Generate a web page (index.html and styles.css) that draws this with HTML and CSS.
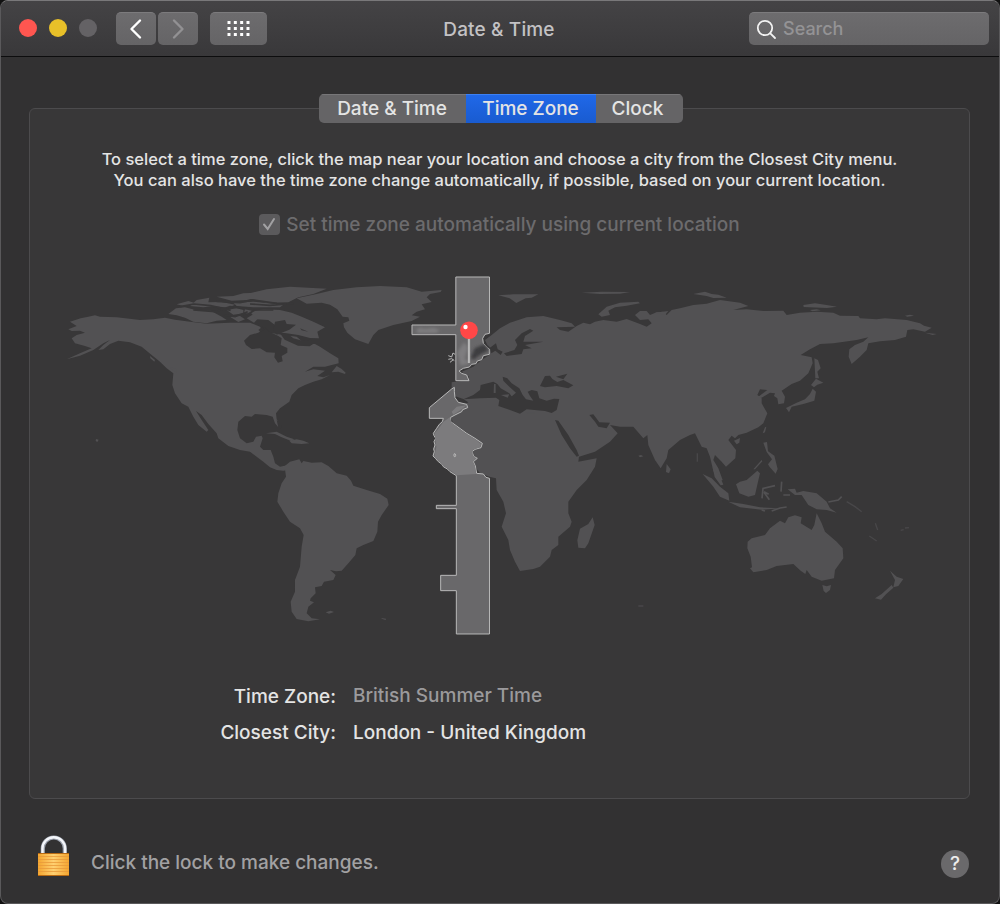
FILE: index.html
```html
<!DOCTYPE html>
<html lang="en">
<head>
<meta charset="utf-8">
<title>Date &amp; Time</title>
<link rel="stylesheet" href="styles.css">
</head>
<body>
<div class="window">
  <header class="titlebar">
    <div class="lights"><i class="light close"></i><i class="light minimise"></i><i class="light zoom"></i></div>
    <div class="nav">
      <button class="tool back" aria-label="Back"><svg width="40" height="33" viewBox="0 0 40 33"><path d="M24 8.500L15.500 17l8.500 8.500"/></svg></button>
      <button class="tool forward" aria-label="Forward"><svg width="40" height="33" viewBox="0 0 40 33"><path d="M16 8.500l8.500 8.500L16 25.500"/></svg></button>
    </div>
    <button class="tool all" aria-label="Show all"><svg width="57" height="33" viewBox="0 0 57 33"><path d="M17.500 10.500h22.500M17.500 16.500h22.500M17.500 22.500h22.500"/></svg></button>
    <h1 class="title"><span class="t-title">Date &amp; Time</span></h1>
    <div class="search"><svg width="22" height="22" viewBox="0 0 22 22"><circle cx="9" cy="9" r="7.200"/><path d="M14.300 14.300l4.700 4.700"/></svg><span class="t-search">Search</span></div>
  </header>
  <main class="content">
    <section class="panel">
      <nav class="tabs">
        <span class="tab tab-date"><span>Date &amp; Time</span></span>
        <span class="tab tab-zone active"><span>Time Zone</span></span>
        <span class="tab tab-clock"><span>Clock</span></span>
      </nav>
      <p class="help"><span class="line1">To select a time zone, click the map near your location and choose a city from the Closest City menu.</span><span class="line2">You can also have the time zone change automatically, if possible, based on your current location.</span></p>
      <div class="auto"><span class="check"><svg width="20" height="20" viewBox="0 0 20 20"><path d="M5 10.500l3.700 4.500L15 5"/></svg></span><span class="t-auto">Set time zone automatically using current location</span></div>
      <svg class="map" width="900" height="380" viewBox="50 265 900 380">
        <defs>
          <linearGradient id="stem" x2="1" y2="0"><stop stop-color="#999"/><stop offset=".5" stop-color="#ccc"/><stop offset="1" stop-color="#888"/></linearGradient>
          <filter id="soft"><feGaussianBlur stdDeviation="4"/></filter>
        </defs>
        <g class="land">
          <!-- North America, Arctic islands and Greenland -->
          <g transform="translate(50 270) scale(.33333)">
            <path d="M60 155L92 145 115 140 135 136 150 140 200 142 270 150 310 148 345 143 375 149 420 155 470 161 540 158 600 158 630 170 640 185 700 195 740 200 765 222 795 222 810 230 840 250 865 265 866 280 848 284 825 290 790 290 765 305 790 298 825 302 802 318 820 322 840 315 815 328 790 335 765 345 745 355 725 375 718 395 690 415 678 430 680 448 690 465 685 472 675 460 668 440 650 435 615 432 605 440 585 438 565 455 562 480 570 505 590 520 610 515 618 500 635 497 638 505 630 530 640 540 662 540 670 560 675 580 690 590 715 585 715 600 700 602 680 600 660 592 640 575 620 560 600 545 570 540 535 528 505 505 500 490 475 462 455 435 438 423 455 450 475 480 470 485 445 465 430 440 415 410 395 400 375 370 367 345 370 310 350 295 330 275 305 255 275 230 240 217 205 212 180 222 160 238 145 240 160 225 180 210 160 220 130 240 90 257 50 268 90 250 125 235 105 228 75 220 65 205 80 195 105 188 90 182 65 183 55 178 80 168z"/>
            <path d="M355 132L378 115 405 112 445 122 482 122 515 140 530 150 500 152 470 160 430 155 405 143 380 136zM380 103L415 93 432 98 420 105 400 108zM420 108L440 90 478 83 475 97 515 96 555 104 535 113 490 108 460 112zM500 80L550 78 580 70 625 68 625 82 590 90 545 92zM530 120L560 115 580 120 580 130 550 134zM585 118L605 122 598 132 582 128zM540 140L570 138 585 148 565 156zM590 145L615 130 625 145 612 158zM565 78L650 58 720 50 830 56 790 72 745 82 715 97 650 98 610 88zM550 98L610 95 700 104 690 112 610 112 560 108z"/>
            <path d="M600 125L640 118 690 120 725 128 755 140 790 155 825 172 802 185 807 205 780 204 745 195 710 190 680 187 675 165 655 150 620 148z"/>
            <path d="M740 85L800 72 850 60 920 52 990 48 1070 52 1115 65 1175 60 1172 66 1140 72 1130 82 1145 96 1115 103 1125 118 1100 125 1085 136 1110 140 1085 153 1030 165 985 180 970 195 955 222 915 208 892 188 882 172 880 160 898 152 895 142 878 140 862 118 840 104 815 98 770 101z"/>
            <path d="M845 307L860 288 875 297 887 308 885 312 865 305zM648 490L680 485 710 500 733 508 722 512 695 502 675 492zM718 512L740 508 760 512 778 520 755 522 725 520zM138 507l8 2-4 7-5-3zM300 258l15 12-2 5-12-10zM360 292l18 5 2 10-12-6z"/>
            <g class="water"><path d="M582 212L600 195 625 188 645 172 655 184 685 198 695 205 692 225 712 234 712 248 695 258 698 274 684 278 673 262 675 248 650 247 630 235 605 237 588 225zM675 155l30-5 5 12 28 2-20 15-38 15-10-15z"/><path d="M690 190l25 3 15 12 30 8 22-4 12 10-15 10-35-2-40-18zM680 450l14 15-1 10-8-2zM625 180l12-10 6 8-10 8zM750 175l25 10-20-4z"/><path class="channels" d="M390 110l42-8 50 5 60 14M430 120l65 5 45-15 50 5M500 94l70 4 40-8 70 10M520 135l35 5 38-15M580 140l35-20 55 0M600 102l60 4 70-6"/></g>
          </g>
          <!-- South America -->
          <g transform="translate(240 430) scale(.33333)">
            <path d="M120 118L130 112 150 95 178 88 185 100 190 93 215 98 245 97 265 108 290 130 320 137 333 152 340 167 380 180 420 192 442 206 446 225 425 255 414 275 412 305 400 333 370 345 350 355 346 375 325 400 305 422 288 424 270 420 287 435 280 450 252 455 245 468 225 472 227 490 212 505 210 512 222 517 205 530 200 550 215 565 240 568 205 574 170 567 155 545 152 515 165 485 165 450 180 410 185 350 191 315 180 295 150 275 130 245 112 215 115 190 125 160 138 140 135 118zM257 547l15-5 10 4-15 5zM423 564l15 2-1 4-10-3z"/>
          </g>
          <!-- Europe, Asia and Africa -->
          <g transform="translate(480 280) scale(.33333)">
            <path d="M-85 307L-35 300-33 290-55 275-20 260 5 240 28 225 32 205 22 195 15 180 35 165 60 145 90 128 140 112 190 108 240 120 275 130 285 140 230 142 240 150 265 155 290 138 310 128 330 133 345 125 370 120 410 125 440 117 480 132 500 140 515 130 505 118 480 120 465 105 480 93 500 93 510 105 530 97 550 95 560 105 575 90 600 85 640 75 680 71 720 60 780 68 805 78 760 90 800 88 850 93 910 92 920 105 960 98 1010 95 1060 98 1080 107 1135 108 1140 115 1190 118 1215 115 1280 120 1320 130 1332 137 1355 143 1335 155 1300 148 1282 150 1278 170 1245 180 1200 184 1165 190 1160 210 1140 230 1115 252 1106 230 1108 208 1125 195 1150 185 1165 172 1130 180 1060 190 1020 192 990 208 962 225 995 232 998 250 985 280 960 302 935 312 905 332 915 350 912 370 895 373 892 355 882 348 885 340 870 338 845 353 835 350 862 330 840 328 832 345 845 355 845 370 862 400 850 430 835 442 800 458 775 465 765 475 755 467 745 480 768 510 766 535 738 560 725 545 705 525 700 540 715 565 728 600 720 603 700 573 690 530 680 505 665 500 645 460 630 465 600 480 565 510 560 535 542 565 525 540 505 495 502 465 490 475 460 440 420 440 390 435 413 460 390 485 345 515 297 530 295 545 350 535 345 560 320 600 290 630 265 665 265 700 275 725 270 740 235 770 235 795 215 810 210 830 180 860 160 867 120 873 105 845 90 810 85 780 65 740 78 700 70 665 50 630 48 595 28 590 0 580-60 500-90 400-35 367-50 357-85 345z"/>
            <path d="M55 46l45-3 75 0-20 10-18 2-28 14-20-14zM305 38l60-3 85 1-30 5-60 1zM355 103L380 80 420 68 475 65 480 70 440 77 405 82 385 92 390 105 365 110zM525 98l40-5-10 12zM640 42l35-7 20 7 20 2 25 9-40 1-20-6zM970 75l35-5 30 4 36 6-30 4-70-3zM990 90l20-2 12 3-25 3zM1275 107l15-3 12 3-20 3zM1335 158l35 4-12 3zM560 552l12 16-5 12-9-4zM338 712l6 23-19 55-10 15-20-2-3-22 8-35 25-14zM475 527l8-2 7 4-10 3z"/>
            <path d="M993 315L1008 296 1030 308 1012 314 1002 322zM998 326L1008 335 1003 362 970 372 935 380 927 397 918 384 950 368 975 358 990 342zM1003 235L1014 240 1022 265 1012 275 1017 295 1006 295zM848 460L855 442 859 440 855 457zM762 482l18-8-2 14-8 5zM850 488l11-2 3 28 19 13 10 40-6 14-18-20-5-8 12-15-16-22zM845 540l-25 28 5 0 22-24z"/>
            <g class="water">
              <path d="M-50 358L-20 345 0 330 2 315 40 305 52 312 62 325 88 340 96 350 90 353 100 345 108 338 88 320 70 302 68 290 82 295 95 310 118 325 128 345 138 358 160 362 150 348 143 335 155 330 172 334 178 355 200 362 222 356 238 357 230 390 215 399 195 393 140 388 120 401 90 390 55 378 58 360 48 353 0 355zM180 318L195 288 210 287 217 297 232 306 250 300 280 316 265 325 230 318 195 322zM228 290l34-9-12 17zM105 180L125 160 150 147 160 152 135 168 130 185 190 185 135 195 155 205 130 208 125 222 80 228 72 220 103 210 112 195zM30 203l18-13 5 18 15 7-6 10-16-13-12 8z"/>
              <path d="M225 420L235 422 265 465 290 510 297 527 290 530 270 505 245 465zM328 405L340 403 358 427 390 428 380 445 355 440 345 425z"/>
            </g>
            <path d="M42 312h5v27h-6zM63 345l25-2-5 10zM140 398h25v3h-22z"/>
          </g>
          <!-- Indonesia, Australia and New Zealand -->
          <g transform="translate(680 430) scale(.33333)">
            <path d="M68 132L95 145 120 170 145 190 148 212 120 200 100 170zM145 215L190 222 240 232 300 235 245 239 180 232zM168 163L180 155 200 150 232 122 240 130 234 155 225 195 205 200 178 190zM98 112l20 22 12 30-8 2-18-25zM323 178L345 176 350 188 370 183 410 190 440 215 450 235 470 248 440 240 410 238 385 225 365 195 345 195zM203 335L215 325 255 315 270 295 300 272 315 280 325 262 345 256 365 262 362 280 395 300 403 285 410 250 425 280 435 305 470 335 488 355 490 385 465 420 462 445 425 452 395 440 380 420 376 432 362 422 340 402 290 408 260 420 220 427 210 415 216 412 212 380 202 355zM427 465l13 4 13-4-3 15-12 9-7-6zM630 422L650 440 670 447 655 468 640 472 645 450zM635 465l5 8-22 20-15 16-18-4 20-13z"/>
            <path class="islands" d="M246 205l3-30 36-8M252 185l14 8M252 187l16 22M305 155l-2 30M310 195l20 0M245 240l10 3M275 243l25-9 20-3M445 216l30-6 10-10"/>
            <path class="islets" d="M500 215l25 15 20 15M568 318l22 15M662 301l9-2M675 294l12-1M586 280l7 20M52 70l0 25M-125 528l15 0"/>
          </g>
        </g>
        <!-- Selected zone -->
        <g transform="translate(400 265) scale(.33333)">
          <g class="zone">
            <path d="M167.500 36H268.500V205L255 208 248 220 250 235 262 248 268 252V268L250 272 245 284 232 288 228 296 215 298 208 306 190 310 177 318 185 325 200 330 207 347H167.500V209H36V180H167.500z"/>
            <path d="M163 367L155 372 88 428V460H130L127 470 118 478 110 490 100 505 102 512 107 520 102 530 105 540 101 552 103 560 99 573 107 581 115 590 126 598 130 605 142 612 150 620 169 632V721H109V731H169V931H122V977H169V1107H268.500V640L258 637 250 627 230 625 226 603 220 590 232 580 221 574 216 560 225 553 243 548 247 535 225 520 200 505 152 470 152 457 165 450 185 440 188 434 203 428 200 418 175 412 165 398 163 380z"/>
          </g>
          <path class="zone-land" d="M130 470L150 457 155 473 200 508 225 522 243 537 240 547 218 555 218 570 228 580 219 590 225 603 228 627 170 631 150 615 130 602 103 575 109 545 106 525 104 505 120 485zM155 440l15-15 30-4-15 12-25 16z"/>
          <path class="zone-glow" d="M48 195l12-7 15 4 25-4 20 8-12 8-55 0zM172 262l20-30 12 15-10 35 18 12-30 8z"/>
          <path class="shadow" d="M212 278l12-28 28-12 15 18-24 12-22 16z"/>
          <path class="outline" d="M145 272l10 4 4-12 6 4M145 283l10-2 8 6M150 292l10-8M163 566q4 0 4 5t-4 4q-3-5 0-9z"/>
        </g>
        <rect x="467.700" y="337" width="2.600" height="26" fill="url(#stem)"/>
        <circle cx="469" cy="330.300" r="8.800" fill="#ff4747"/>
        <circle cx="465.500" cy="327" r="2.200" fill="#fff"/>
      </svg>
      <dl class="info">
        <dt><span class="t-zone">Time Zone:</span></dt><dd class="muted"><span class="t-bst">British Summer Time</span></dd>
        <dt><span class="t-city">Closest City:</span></dt><dd><span class="t-london">London - United Kingdom</span></dd>
      </dl>
    </section>
    <footer class="footer">
      <svg class="lock" width="34" height="42" viewBox="0 0 34 42">
        <defs><linearGradient id="brass" x2="1" y2="0"><stop stop-color="#f4a52f"/><stop offset=".5" stop-color="#ffd071"/><stop offset="1" stop-color="#f4a52f"/></linearGradient></defs>
        <path d="M5.800 19V13.500a11 11 0 0 1 22 0V19" fill="none" stroke="#9ba1ad" stroke-width="4.200"/>
        <path d="M5.500 19V13.500a11.300 11.300 0 0 1 22.600 0V19" fill="none" stroke="#f4f6fa" stroke-width="2.400"/>
        <path d="M1 18h31v23H1z" fill="url(#brass)"/>
        <path d="M1 21.500h31M1 24.500h31M1 27.500h31M1 30.500h31M1 33.500h31M1 36.500h31" stroke="#e8993a" stroke-width=".8"/>
        <path d="M1 18.500h31M1 40.500h31" stroke="#b96a12"/>
      </svg>
      <span class="t-lock">Click the lock to make changes.</span>
      <span class="question">?</span>
    </footer>
  </main>
</div>
</body>
</html>
```
FILE: styles.css
```css
* { box-sizing: border-box; }
body { margin: 0; background: #111; font-family: Inter, "Liberation Sans", sans-serif; font-size: 19px; font-weight: 450; color: #e4e4e4; }
.window { width: 1000px; height: 904px; display: flex; flex-direction: column; background: #323132; border: 1px solid #5a595b; border-top-color: #79787a; border-radius: 8px; overflow: hidden; }
.titlebar { height: 56px; flex: none; display: flex; align-items: flex-start; padding: 11px 10px 0 18px; background: linear-gradient(#444345, #39383a); border-bottom: 1px solid #0d0d0e; }
.lights { display: flex; gap: 12px; padding-top: 7px; width: 97px; }
.light { width: 18px; height: 18px; border-radius: 50%; }
.close { background: #ff5650; }
.minimise { background: #e8c029; }
.zoom { background: #646265; }
.nav { display: flex; gap: 2px; }
.tool { width: 40px; height: 33px; padding: 0; border: 0; border-top: 1px solid #7c7b7d; border-radius: 5px; background: linear-gradient(#6d6c6e, #656466); overflow: hidden; }
.tool svg { display: block; margin-top: -1px; fill: none; stroke: #fff; stroke-width: 2.400; stroke-linecap: round; stroke-linejoin: round; }
.forward svg { stroke: #929193; }
.tool.all { width: 57px; margin-left: 12px; }
.all svg { stroke-width: 3; stroke-linecap: butt; stroke-dasharray: 3 3.330; }
.title { flex: 1; margin: 6px 0 0; padding-right: 18px; font-size: 19px; line-height: 24px; font-weight: 450; letter-spacing: .15px; color: #c3c2c4; display: flex; justify-content: center; }
.search { width: 240px; height: 33px; display: flex; align-items: center; gap: 5px; padding-left: 7px; border-radius: 5px; border-top: 1px solid #7c7b7d; background: linear-gradient(#6d6c6e, #656466); color: #949395; }
.search span { font-size: 18px; margin-top: -2px; }
.search svg { fill: none; stroke: #f2f2f2; stroke-width: 1.800; stroke-linecap: round; margin-top: 1px; }
.content { flex: 1; display: flex; flex-direction: column; padding: 51px 29px 0 28px; }
.panel { height: 691px; display: flex; flex-direction: column; align-items: center; background: #383738; border: 1px solid #4c4b4d; border-radius: 6px; }
.tabs { display: flex; width: 364px; height: 29px; margin: -15px 0 0 2px; border-radius: 5px; overflow: hidden; background: #656466; flex: none; }
.tab { display: flex; align-items: center; justify-content: center; border-top: 1px solid #777678; line-height: 26px; padding-bottom: 1px; }
.tab-date { width: 147px; } .tab-zone { width: 130px; } .tab-clock { width: 87px; padding-right: 3px; }
.active { background: linear-gradient(#2068e8, #195bd0); border-top-color: #3c80f3; }
.help { margin: 26px 0 0; font-size: 16.500px; line-height: 21px; text-align: center; display: flex; flex-direction: column; align-items: center; }
.help span, .auto span, .info span, .footer span, .title span, .search span, .tab span { white-space: nowrap; }
.auto { display: flex; align-items: center; gap: 6px; height: 24px; margin-top: 21px; color: #6c6b6d; }
.check { width: 21px; height: 21px; border-radius: 4px; background: #5b5a5c; }
.check svg { display: block; fill: none; stroke: #a1a0a2; stroke-width: 2; stroke-linecap: round; }
.map { display: block; margin: 29px 0 0 1px; flex: none; }
.land { fill: #525153; }
.water { fill: #383738; }
.channels { fill: none; stroke: #383738; stroke-width: 5; }
.islands { fill: none; stroke: #525153; stroke-width: 5; }
.islets { fill: none; stroke: #484749; stroke-width: 4; }
.zone { fill: #69686a; stroke: #b9b9b9; stroke-width: 3; }
.zone-land { fill: #7c7b7d; }
.zone-glow { fill: #7e7d7f; filter: url(#soft); }
.shadow { fill: #3e3d3f; filter: url(#soft); }
.outline { fill: none; stroke: #b9b9b9; stroke-width: 3; }
.info { width: 900px; margin: 34px 0 0 1px; display: grid; grid-template-columns: 286px 1fr; column-gap: 17px; grid-auto-rows: 36px; line-height: 36px; }
.info dt { text-align: right; }
.info dd { margin: 0; }
.muted { color: #9b9a9c; }
.muted span { display: block; margin-top: -1px; }
.footer { display: flex; align-items: center; height: 60px; margin-top: 35px; padding-left: 8px; color: #a2a1a3; }
.lock { margin: -17px 20px 0 0; }
.t-lock { margin-top: -3px; }
.question { width: 28px; height: 28px; border-radius: 50%; background: #6a696b; color: #ededed; text-align: center; line-height: 28px; margin: 0 1px 0 auto; font-weight: 500; }
```
